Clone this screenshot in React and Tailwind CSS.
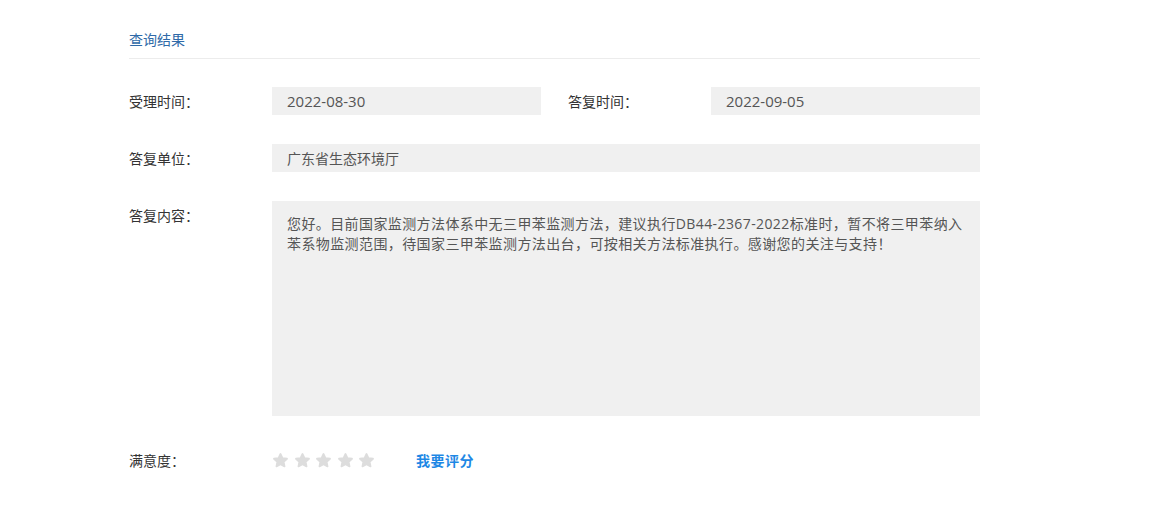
const font = { fontFamily: '"Microsoft YaHei", "Open Sans", "Noto Sans CJK SC", sans-serif' };

function Star() {
  return (
    <svg width="17" height="17" viewBox="0 0 24 24" className="text-[#dddddd]">
      <path
        fill="currentColor"
        stroke="currentColor"
        strokeWidth="2.5"
        strokeLinejoin="round"
        d="M12 2.8l2.8 5.9 6.4.8-4.7 4.4 1.2 6.4L12 17.2l-5.7 3.1 1.2-6.4-4.7-4.4 6.4-.8z"
      />
    </svg>
  );
}

function Label({ children, className = "" }) {
  return <div className={`w-[143px] shrink-0 text-[14px] text-[#333] ${className}`}>{children}</div>;
}

function Field({ children, className = "" }) {
  return (
    <div className={`h-[28px] bg-[#f0f0f0] pl-[15px] flex items-center text-[#555] ${className}`}>
      {children}
    </div>
  );
}

export default function App() {
  return (
    <div className="min-h-screen bg-white" style={font}>
      <div className="ml-[129px] w-[851px] pt-[30px]">
        <div className="text-[14px] text-[#2f6aa8] leading-[20px] pb-[8px] border-b border-[#ececec]">查询结果</div>

        <div className="flex items-center mt-[28px]">
          <Label>受理时间：</Label>
          <Field className="w-[269px] text-[15px]">2022-08-30</Field>
          <Label className="ml-[27px]">答复时间：</Label>
          <Field className="w-[269px] text-[15px]">2022-09-05</Field>
        </div>

        <div className="flex items-center mt-[29px]">
          <Label>答复单位：</Label>
          <Field className="flex-1 text-[14px]">广东省生态环境厅</Field>
        </div>

        <div className="flex mt-[29px]">
          <Label className="pt-[4px]">答复内容：</Label>
          <div className="flex-1 h-[215px] bg-[#f0f0f0] pl-[15px] pr-[14px] pt-[13px] text-[14px] leading-[20px] tracking-[0.4px] text-[#555]">
            您好。目前国家监测方法体系中无三甲苯监测方法，建议执行DB44-2367-2022标准时，暂不将三甲苯纳入苯系物监测范围，待国家三甲苯监测方法出台，可按相关方法标准执行。感谢您的关注与支持！
          </div>
        </div>

        <div className="flex items-center mt-[30px] h-[28px]">
          <Label>满意度：</Label>
          <div className="flex items-center gap-[4.5px]">
            <Star />
            <Star />
            <Star />
            <Star />
            <Star />
          </div>
          <a href="#" className="ml-[41px] text-[14px] font-bold tracking-[0.5px] text-[#1e88e5]">我要评分</a>
        </div>
      </div>
    </div>
  );
}
